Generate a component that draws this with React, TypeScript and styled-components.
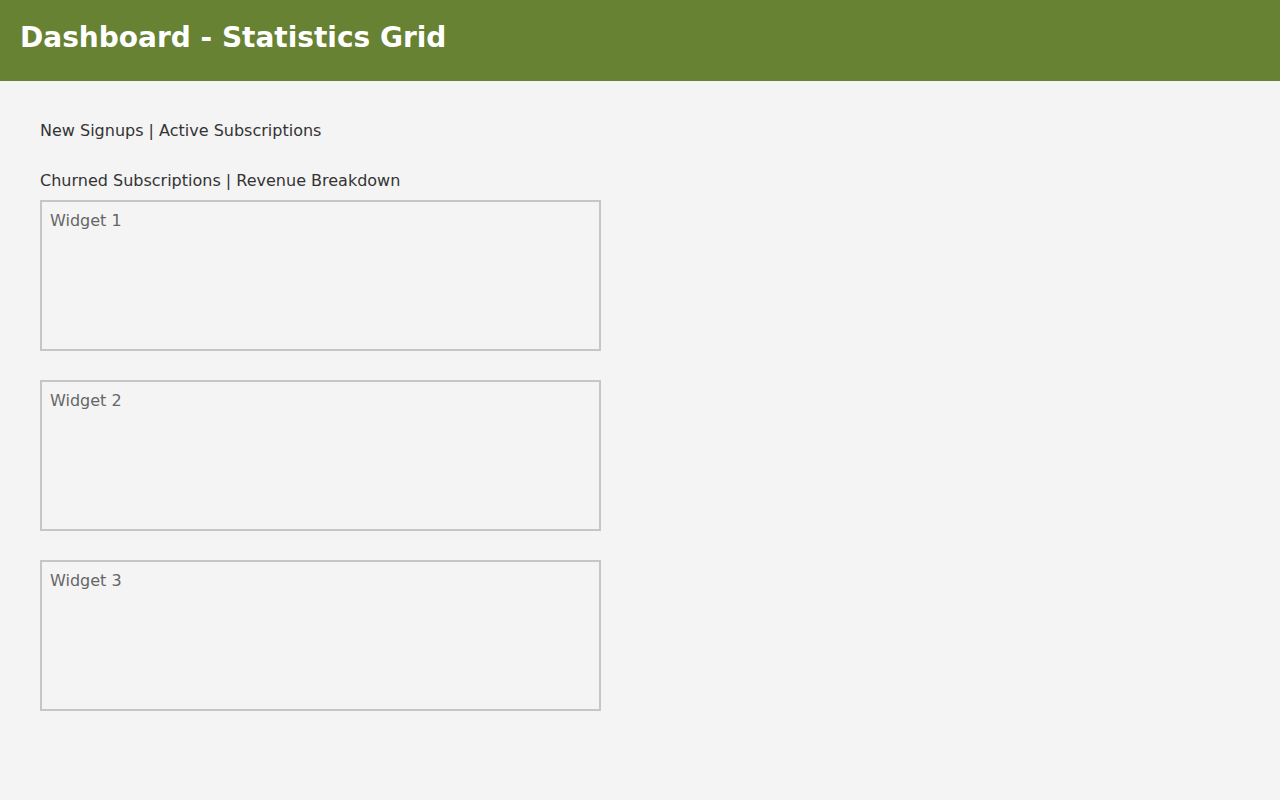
import React from 'react';
import styled, { createGlobalStyle } from 'styled-components';

const GlobalStyle = createGlobalStyle`
  html, body {
    margin: 0;
    padding: 0;
    background: #f4f4f4;
    font-family: 'DejaVu Sans', sans-serif;
  }
`;

const Header = styled.header`
  box-sizing: border-box;
  height: 81px;
  padding: 20px;
  background: #688233;
`;

const Title = styled.h1`
  margin: 0;
  font-size: 28px;
  line-height: 35px;
  font-weight: 700;
  color: #ffffff;
`;

const Main = styled.main`
  padding: 40px;
`;

const StatLine = styled.p`
  margin: 0 0 31px;
  font-size: 16px;
  line-height: 19px;
  color: #333333;

  &:last-of-type {
    margin-bottom: 10px;
  }
`;

const WidgetList = styled.div`
  display: flex;
  flex-direction: column;
  gap: 29px;
`;

const Widget = styled.section`
  box-sizing: border-box;
  width: 561px;
  height: 151px;
  padding: 9px 8px;
  border: 2px solid #c6c6c6;
  font-size: 16px;
  line-height: 19px;
  color: #666666;
`;

const stats = ['New Signups | Active Subscriptions', 'Churned Subscriptions | Revenue Breakdown'];
const widgets = ['Widget 1', 'Widget 2', 'Widget 3'];

export default function App() {
  return (
    <>
      <GlobalStyle />
      <Header>
        <Title>Dashboard - Statistics Grid</Title>
      </Header>
      <Main>
        {stats.map((s) => (
          <StatLine key={s}>{s}</StatLine>
        ))}
        <WidgetList>
          {widgets.map((w) => (
            <Widget key={w}>{w}</Widget>
          ))}
        </WidgetList>
      </Main>
    </>
  );
}
